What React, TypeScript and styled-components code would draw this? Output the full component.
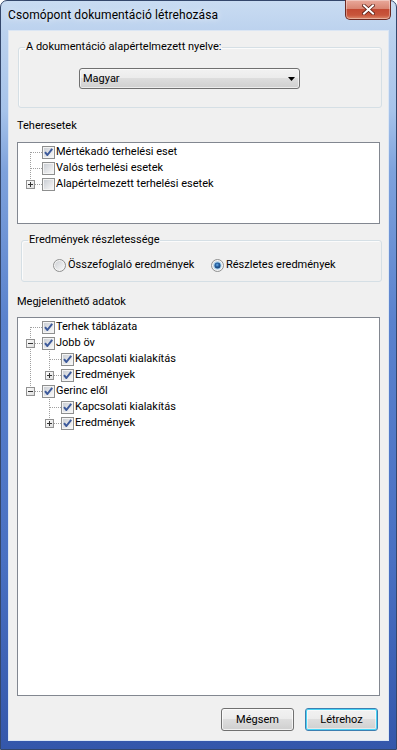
import React from 'react';
import styled, { createGlobalStyle } from 'styled-components';

const GlobalStyle = createGlobalStyle`
  html, body {
    margin: 0;
    padding: 0;
    background: #ffffff;
  }
  body {
    font-family: Roboto, "Noto Sans", sans-serif;
    font-size: 11px;
    color: #000;
  }
`;

const Window = styled.div`
  width: 397px;
  height: 750px;
  box-sizing: border-box;
  display: flex;
  flex-direction: column;
  padding: 0 7px 8px 7px;
  border: 1px solid #34476b;
  border-radius: 7px 7px 0 0;
  background: linear-gradient(
    to bottom,
    #c9dcf2 0px,
    #bcd2ee 30px,
    #a6c3ea 110px,
    #7ea2dc 170px,
    #5a82cd 320px,
    #4970c2 560px,
    #3457ab 100%
  );
`;

const TitleBar = styled.div`
  height: 29px;
  display: flex;
  align-items: center;
  justify-content: space-between;
`;

const TitleText = styled.div`
  font-size: 12px;
  letter-spacing: 0.1px;
  color: #000;
  text-shadow: 0 0 6px rgba(255, 255, 255, 0.9);
  padding-bottom: 1px;
`;

const CloseButton = styled.div`
  align-self: flex-start;
  margin: -1px -2px 0 0;
  width: 46px;
  height: 20px;
  box-sizing: border-box;
  border: 1px solid #6d2a22;
  border-top: none;
  border-radius: 0 0 5px 5px;
  background: linear-gradient(to bottom, #e9a99b 0%, #d98673 45%, #c34a33 50%, #c8563c 80%, #dd8a6c 100%);
  box-shadow: inset 0 0 0 1px rgba(255, 255, 255, 0.35);
  display: flex;
  align-items: center;
  justify-content: center;
`;

const Body = styled.div`
  flex: 1;
  display: flex;
  flex-direction: column;
  background: #f0f0f0;
  border: 1px solid #dbe6f4;
  padding: 8px 8px 9px 8px;
  min-height: 0;
`;

const GroupBox = styled.fieldset<{ $left: number; $top?: number }>`
  margin: ${p => p.$top ?? 0}px -2px 0 ${p => p.$left}px;
  padding: 0 6px;
  border: 1px solid #d5dfe5;
  border-radius: 3px;
  min-width: 0;
  box-shadow: inset 1px 1px 0 #fbfbfb;
`;

const Legend = styled.legend`
  padding: 0 1px;
  line-height: 16px;
`;

const ComboRow = styled.div`
  padding: 13px 0 18px 54px;
`;

const Combo = styled.div`
  width: 221px;
  height: 21px;
  box-sizing: border-box;
  display: flex;
  align-items: center;
  justify-content: space-between;
  padding: 0 4px 0 3px;
  border: 1px solid #707070;
  border-radius: 3px;
  background: linear-gradient(to bottom, #f2f2f2 0%, #ebebeb 50%, #dddddd 50%, #cfcfcf 100%);
  box-shadow: inset 0 0 0 1px rgba(255, 255, 255, 0.6);
`;

const SectionLabel = styled.div<{ $top: number; $bottom: number }>`
  line-height: 16px;
  margin: ${p => p.$top}px 0 ${p => p.$bottom}px 0;
`;

const TreeBox = styled.div<{ $grow?: boolean }>`
  background: #fff;
  border: 1px solid #828790;
  padding: 1px 0 0 5px;
  ${p => (p.$grow ? 'flex: 1; min-height: 0;' : 'height: 79px;')}
`;

const TreeRow = styled.div`
  display: flex;
  align-items: center;
  height: 16px;
`;

const TreeLabel = styled.span`
  padding: 0 1px;
  line-height: 16px;
  white-space: nowrap;
`;

const RadioRow = styled.div`
  display: grid;
  grid-template-columns: 158px auto;
  padding: 9px 0 8px 25px;
`;

const RadioItem = styled.label`
  display: flex;
  align-items: center;
  gap: 2px;
  height: 16px;
  line-height: 16px;
  white-space: nowrap;
`;

const ButtonRow = styled.div`
  display: flex;
  justify-content: flex-end;
  gap: 11px;
  margin: 12px 2px 0 0;
`;

const Button = styled.button<{ $default?: boolean }>`
  width: 73px;
  height: 23px;
  box-sizing: border-box;
  padding: 0;
  font-family: inherit;
  font-size: 11px;
  color: #000;
  border-radius: 3px;
  border: 1px solid ${p => (p.$default ? '#3c7fb1' : '#707070')};
  background: linear-gradient(to bottom, #f2f2f2 0%, #ebebeb 50%, #dddddd 50%, #cfcfcf 100%);
  box-shadow: ${p =>
    p.$default
      ? 'inset 0 0 0 1px #48d4f6, inset 0 0 0 2px rgba(255,255,255,0.5)'
      : 'inset 0 0 0 1px rgba(255,255,255,0.7)'};
`;

/* ---------- drawings ---------- */

const CloseGlyph = () => (
  <svg width="13" height="11" viewBox="0 0 13 11">
    <path
      d="M2 1.5 L11 9.5 M11 1.5 L2 9.5"
      stroke="#5a1d14"
      strokeWidth="3.6"
      strokeLinecap="square"
    />
    <path
      d="M2 1.5 L11 9.5 M11 1.5 L2 9.5"
      stroke="#ffffff"
      strokeWidth="2"
      strokeLinecap="square"
    />
  </svg>
);

const DropArrow = () => (
  <svg width="7" height="4" viewBox="0 0 7 4">
    <path d="M0 0 H7 L3.5 4 Z" fill="#000" />
  </svg>
);

const CheckBox = ({ checked }: { checked: boolean }) => (
  <svg width="13" height="13" viewBox="0 0 13 13" style={{ flex: 'none' }}>
    <defs>
      <linearGradient id="cbFill" x1="0" y1="0" x2="1" y2="1">
        <stop offset="0" stopColor="#cbcfd5" />
        <stop offset="1" stopColor="#f7f7f7" />
      </linearGradient>
    </defs>
    <rect x="0.5" y="0.5" width="12" height="12" fill="#f4f4f4" stroke="#8e8f8f" />
    <rect x="2" y="2" width="9" height="9" fill="url(#cbFill)" />
    {checked && (
      <path
        d="M3 6.2 L5.4 9 L10.2 2.8"
        fill="none"
        stroke="#3d5a9b"
        strokeWidth="2"
        strokeLinejoin="round"
      />
    )}
  </svg>
);

const Radio = ({ checked }: { checked: boolean }) => (
  <svg width="13" height="13" viewBox="0 0 13 13" style={{ flex: 'none' }}>
    <defs>
      <linearGradient id="rdFill" x1="0" y1="0" x2="1" y2="1">
        <stop offset="0" stopColor="#cfd2d6" />
        <stop offset="1" stopColor="#f8f8f8" />
      </linearGradient>
      <radialGradient id="rdDot" cx="0.45" cy="0.4" r="0.6">
        <stop offset="0" stopColor="#6fb4e8" />
        <stop offset="0.45" stopColor="#2a66a8" />
        <stop offset="1" stopColor="#173d6e" />
      </radialGradient>
    </defs>
    <circle cx="6.5" cy="6.5" r="6" fill="#f4f4f4" stroke="#8e8f8f" />
    <circle cx="6.5" cy="6.5" r="4.5" fill="url(#rdFill)" />
    {checked && (
      <>
        <circle cx="6.5" cy="6.5" r="4" fill="#a7d3f0" />
        <circle cx="6.5" cy="6.5" r="3" fill="url(#rdDot)" />
      </>
    )}
  </svg>
);

type Connector = {
  up: boolean;
  down: boolean;
  expander?: 'plus' | 'minus';
};

const LINE = '#a0a0a0';

const IndentCell = ({ through }: { through: boolean }) => (
  <svg width="19" height="16" viewBox="0 0 19 16" style={{ flex: 'none' }}>
    {through && (
      <line x1="7.5" y1="0" x2="7.5" y2="16" stroke={LINE} strokeDasharray="1 1" shapeRendering="crispEdges" />
    )}
  </svg>
);

const ConnectorCell = ({ up, down, expander }: Connector) => (
  <svg width="19" height="16" viewBox="0 0 19 16" style={{ flex: 'none' }}>
    {up && <line x1="7.5" y1="0" x2="7.5" y2="8" stroke={LINE} strokeDasharray="1 1" shapeRendering="crispEdges" />}
    {down && <line x1="7.5" y1="8" x2="7.5" y2="16" stroke={LINE} strokeDasharray="1 1" shapeRendering="crispEdges" />}
    <line x1="8" y1="8.5" x2="19" y2="8.5" stroke={LINE} strokeDasharray="1 1" shapeRendering="crispEdges" />
    {expander && (
      <>
        <defs>
          <linearGradient id="expFill" x1="0" y1="0" x2="1" y2="1">
            <stop offset="0" stopColor="#ffffff" />
            <stop offset="1" stopColor="#dcdcdc" />
          </linearGradient>
        </defs>
        <rect x="3.5" y="4.5" width="8" height="8" fill="url(#expFill)" stroke="#919191" shapeRendering="crispEdges" />
        <line x1="5" y1="8.5" x2="10" y2="8.5" stroke="#333" shapeRendering="crispEdges" />
        {expander === 'plus' && (
          <line x1="7.5" y1="6" x2="7.5" y2="11" stroke="#333" shapeRendering="crispEdges" />
        )}
      </>
    )}
  </svg>
);

/* ---------- tree data ---------- */

type TreeNode = {
  label: string;
  checked: boolean;
  expanded?: boolean;
  children?: TreeNode[];
};

const loadCases: TreeNode[] = [
  { label: 'Mértékadó terhelési eset', checked: true },
  { label: 'Valós terhelési esetek', checked: false },
  { label: 'Alapértelmezett terhelési esetek', checked: false, children: [{ label: '', checked: false }] },
];

const displayData: TreeNode[] = [
  { label: 'Terhek táblázata', checked: true },
  {
    label: 'Jobb öv',
    checked: true,
    expanded: true,
    children: [
      { label: 'Kapcsolati kialakítás', checked: true },
      { label: 'Eredmények', checked: true, children: [{ label: '', checked: true }] },
    ],
  },
  {
    label: 'Gerinc elől',
    checked: true,
    expanded: true,
    children: [
      { label: 'Kapcsolati kialakítás', checked: true },
      { label: 'Eredmények', checked: true, children: [{ label: '', checked: true }] },
    ],
  },
];

type FlatRow = {
  key: string;
  node: TreeNode;
  ancestors: boolean[];
  connector: Connector;
};

function flatten(nodes: TreeNode[], ancestors: boolean[] = [], prefix = ''): FlatRow[] {
  const rows: FlatRow[] = [];
  nodes.forEach((node, i) => {
    const isRoot = ancestors.length === 0;
    const hasNext = i < nodes.length - 1;
    const hasKids = !!node.children && node.children.length > 0;
    rows.push({
      key: prefix + i,
      node,
      ancestors,
      connector: {
        up: !(isRoot && i === 0),
        down: hasNext,
        expander: hasKids ? (node.expanded ? 'minus' : 'plus') : undefined,
      },
    });
    if (hasKids && node.expanded) {
      rows.push(...flatten(node.children!, [...ancestors, hasNext], prefix + i + '-'));
    }
  });
  return rows;
}

const Tree = ({ nodes, grow }: { nodes: TreeNode[]; grow?: boolean }) => (
  <TreeBox $grow={grow}>
    {flatten(nodes).map(row => (
      <TreeRow key={row.key}>
        {row.ancestors.map((through, i) => (
          <IndentCell key={i} through={through} />
        ))}
        <ConnectorCell {...row.connector} />
        <CheckBox checked={row.node.checked} />
        <TreeLabel>{row.node.label}</TreeLabel>
      </TreeRow>
    ))}
  </TreeBox>
);

export default function App() {
  return (
    <>
      <GlobalStyle />
      <Window>
        <TitleBar>
          <TitleText>Csomópont dokumentáció létrehozása</TitleText>
          <CloseButton>
            <CloseGlyph />
          </CloseButton>
        </TitleBar>
        <Body>
          <GroupBox $left={1}>
            <Legend>A dokumentáció alapértelmezett nyelve:</Legend>
            <ComboRow>
              <Combo>
                <span>Magyar</span>
                <DropArrow />
              </Combo>
            </ComboRow>
          </GroupBox>

          <SectionLabel $top={10} $bottom={8}>Teheresetek</SectionLabel>
          <Tree nodes={loadCases} />

          <GroupBox $left={4} $top={8}>
            <Legend>Eredmények részletessége</Legend>
            <RadioRow>
              <RadioItem>
                <Radio checked={false} />
                Összefoglaló eredmények
              </RadioItem>
              <RadioItem>
                <Radio checked />
                Részletes eredmények
              </RadioItem>
            </RadioRow>
          </GroupBox>

          <SectionLabel $top={12} $bottom={7}>Megjeleníthető adatok</SectionLabel>
          <Tree nodes={displayData} grow />

          <ButtonRow>
            <Button>Mégsem</Button>
            <Button $default>Létrehoz</Button>
          </ButtonRow>
        </Body>
      </Window>
    </>
  );
}
